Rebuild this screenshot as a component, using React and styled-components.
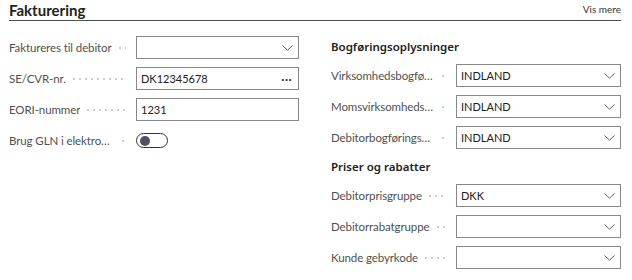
import React from 'react';
import styled, { createGlobalStyle } from 'styled-components';

const GlobalStyle = createGlobalStyle`
  body {
    margin: 0;
    background: #fff;
    font-family: Lato, 'Noto Sans', sans-serif;
    color: #212121;
  }
`;

function Chevron() {
  return (
    <svg width="11" height="6" viewBox="0 0 11 6">
      <path d="M0.5 0.5 L5.5 5.2 L10.5 0.5" fill="none" stroke="#605e5c" strokeWidth="1" />
    </svg>
  );
}

function Field({ label, value, kind, labelWidth = 127, inputWidth = 163 }) {
  return (
    <Row>
      <LabelCell $width={labelWidth}>
        <LabelText>{label}</LabelText>
        <Leader />
      </LabelCell>
      {kind === 'toggle' ? (
        <Toggle>
          <Knob />
        </Toggle>
      ) : (
        <Input $width={inputWidth}>
          <Value>{value}</Value>
          {kind === 'select' && <Chevron />}
          {kind === 'lookup' && <Dots>···</Dots>}
        </Input>
      )}
    </Row>
  );
}

const right = { labelWidth: 125, inputWidth: 165 };

export default function App() {
  return (
    <>
      <GlobalStyle />
      <Page>
        <Header>
          <Title>Fakturering</Title>
          <ShowMore>Vis mere</ShowMore>
        </Header>
        <Columns>
          <Column>
            <Field label="Faktureres til debitor" kind="select" />
            <Field label="SE/CVR-nr." value="DK12345678" kind="lookup" />
            <Field label="EORI-nummer" value="1231" />
            <Field label="Brug GLN i elektroniske dokumenter" kind="toggle" />
          </Column>
          <Column>
            <GroupTitle>Bogføringsoplysninger</GroupTitle>
            <Field {...right} label="Virksomhedsbogføringsgruppe" value="INDLAND" kind="select" />
            <Field {...right} label="Momsvirksomhedsbogføringsgruppe" value="INDLAND" kind="select" />
            <Field {...right} label="Debitorbogføringsgruppe" value="INDLAND" kind="select" />
            <GroupTitle $second>Priser og rabatter</GroupTitle>
            <Field {...right} label="Debitorprisgruppe" value="DKK" kind="select" />
            <Field {...right} label="Debitorrabatgruppe" kind="select" />
            <Field {...right} label="Kunde gebyrkode" kind="select" />
          </Column>
        </Columns>
      </Page>
    </>
  );
}

const Page = styled.div`
  width: 612px;
  padding: 0 11px 0 9px;
`;

const Header = styled.div`
  display: flex;
  justify-content: space-between;
  align-items: flex-end;
  height: 20px;
  border-bottom: 1px solid #505050;
`;

const Title = styled.div`
  font-size: 15px;
  font-weight: 700;
  line-height: 20px;
  color: #212121;
`;

const ShowMore = styled.div`
  font-size: 10px;
  line-height: 14px;
  padding-bottom: 4px;
  color: #333;
`;

const Columns = styled.div`
  display: grid;
  grid-template-columns: 290px 290px;
  column-gap: 32px;
`;

const Column = styled.div`
  display: flex;
  flex-direction: column;
  gap: 8px;
  padding-top: 15px;
`;

const GroupTitle = styled.div`
  font-family: 'Noto Sans', sans-serif;
  font-size: 11.5px;
  font-weight: 600;
  line-height: 18px;
  margin-top: ${(p) => (p.$second ? '1px' : '2px')};
  color: #212121;
`;

const Row = styled.div`
  display: flex;
  align-items: center;
  height: 23px;
`;

const LabelCell = styled.div`
  display: flex;
  align-items: center;
  width: ${(p) => p.$width}px;
  flex-shrink: 0;
  padding-right: 10px;
  box-sizing: border-box;
  min-width: 0;
`;

const LabelText = styled.span`
  font-size: 11.5px;
  letter-spacing: -0.1px;
  color: #505050;
  white-space: nowrap;
  overflow: hidden;
  text-overflow: ellipsis;
  min-width: 0;
`;

const Leader = styled.span`
  flex: 1 0 6px;
  height: 4px;
  margin-left: 5px;
  background-image: radial-gradient(circle, #cccccc 0.8px, transparent 1.1px);
  background-size: 6px 4px;
  background-repeat: repeat-x;
`;

const Input = styled.div`
  display: flex;
  align-items: center;
  width: ${(p) => p.$width}px;
  height: 23px;
  box-sizing: border-box;
  border: 1px solid #8a8886;
  padding: 0 5px 0 4px;
`;

const Value = styled.span`
  flex: 1;
  font-size: 11px;
  color: #212121;
`;

const Dots = styled.span`
  font-size: 14px;
  color: #333;
  line-height: 1;
  padding-right: 1px;
`;

const Toggle = styled.div`
  display: flex;
  align-items: center;
  width: 32px;
  height: 15px;
  box-sizing: border-box;
  border: 1px solid #333;
  border-radius: 8px;
  padding-left: 3px;
`;

const Knob = styled.span`
  width: 10px;
  height: 10px;
  border-radius: 50%;
  background: #505062;
`;
